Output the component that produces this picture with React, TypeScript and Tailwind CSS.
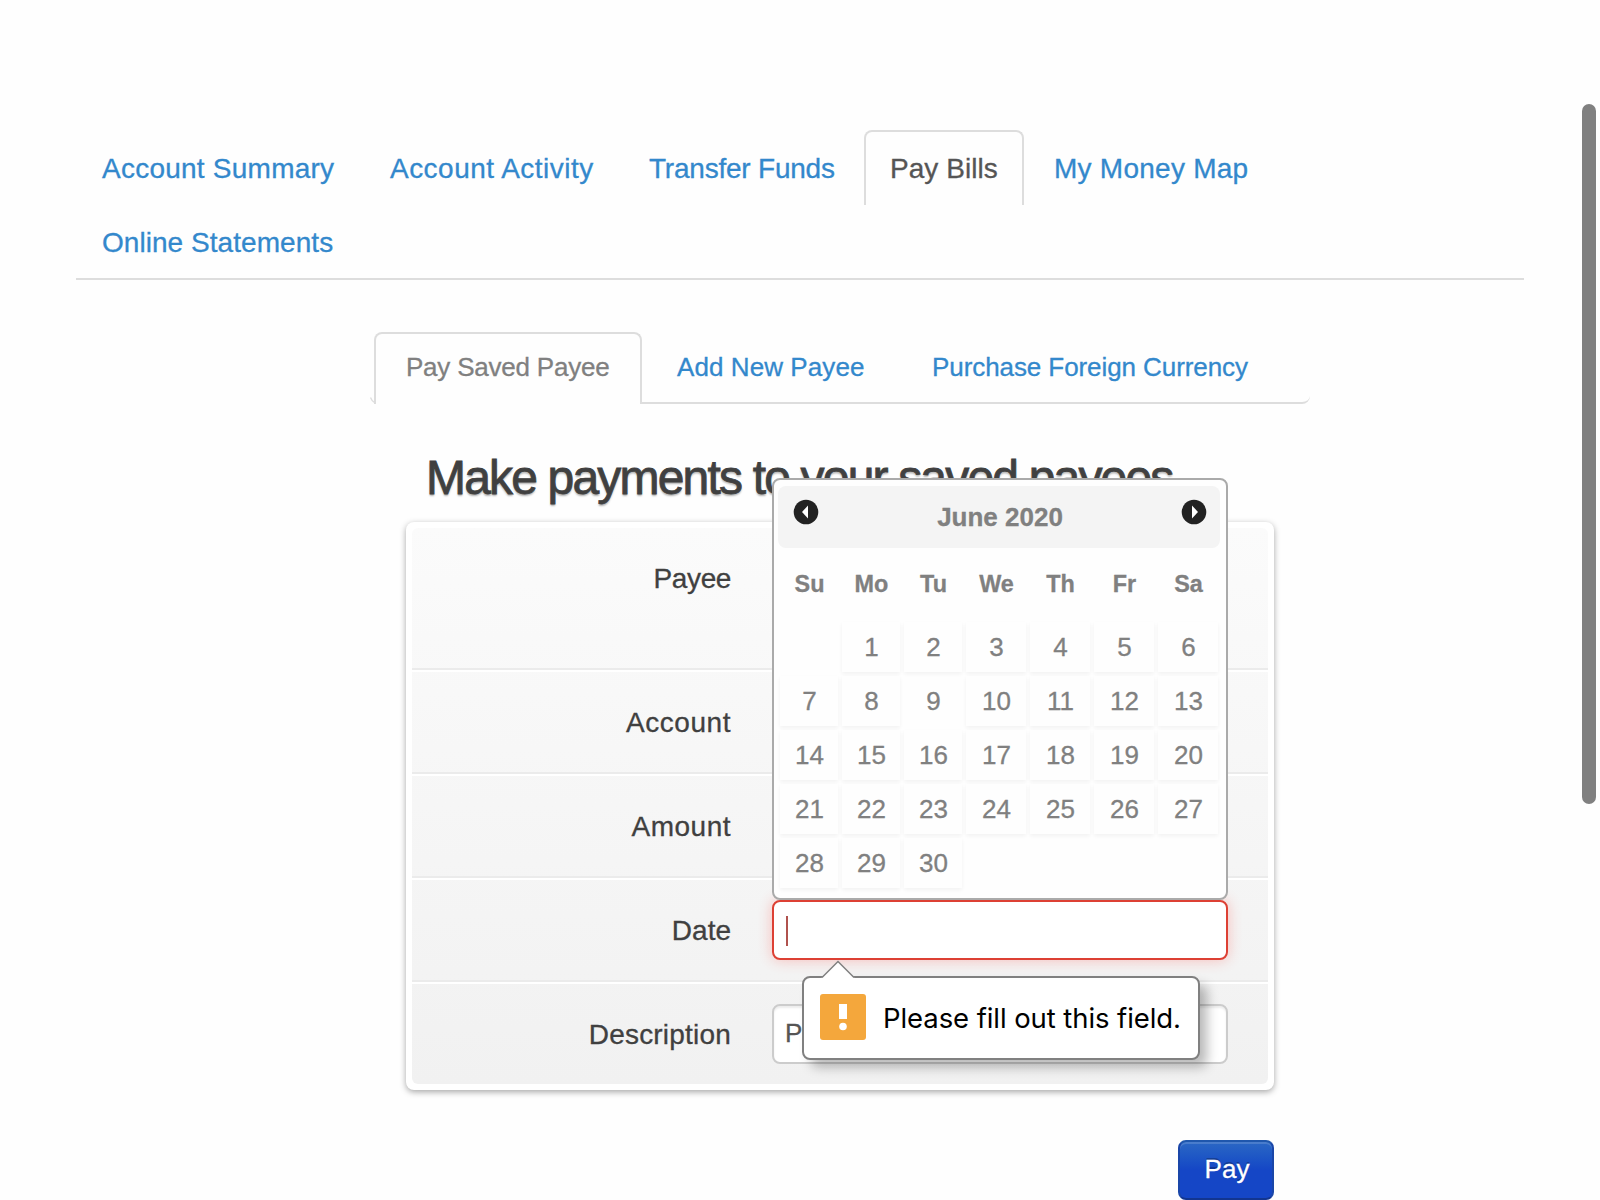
import React from "react";

const mainTabs = [
  { label: "Account Summary", box: "w-[284px]", spacing: "tracking-[0.24px]" },
  { label: "Account Activity", box: "w-[255px]", spacing: "tracking-[0.47px]" },
  { label: "Transfer Funds", box: "w-[237px]", spacing: "tracking-[-0.22px]" },
  { label: "Pay Bills", box: "w-[160px]", spacing: "tracking-[0.05px]", active: true },
  { label: "My Money Map", box: "w-[246px]", spacing: "tracking-[0.25px]" },
  { label: "Online Statements", box: "w-[284px]", spacing: "tracking-[0.05px]" },
];

const weekdays = ["Su", "Mo", "Tu", "We", "Th", "Fr", "Sa"];
const leadingBlanks = 1;
const days = Array.from({ length: 30 }, (_, i) => i + 1);

function MainTabs() {
  return (
    <nav className="mt-[130px] ml-[76px] flex h-[150px] w-[1448px] flex-wrap content-start border-b-2 border-[#dddddd]">
      {mainTabs.map((tab) => (
        <a
          key={tab.label}
          className={
            "mr-1 block pl-6 pt-[17px] text-[28px] leading-10 whitespace-nowrap border-2 border-b-0 rounded-t-lg " +
            tab.box + " " + tab.spacing + " " +
            (tab.active
              ? "h-[75px] -mb-px border-[#dddddd] text-[#555555]"
              : "h-[74px] border-transparent text-[#3388cc]")
          }
        >
          {tab.label}
        </a>
      ))}
    </nav>
  );
}

function PayTabs() {
  return (
    <div className="relative mt-[52px] ml-[374px] flex h-[72px] w-[936px] text-[26px] leading-9 whitespace-nowrap">
      <svg className="absolute bottom-0 -left-1 h-2 w-1.5" viewBox="0 0 6 8">
        <path d="M0.5 1.5Q1.5 5 5 7" fill="none" stroke="#dddddd" strokeWidth="1.3" />
      </svg>
      <a className="block w-[268px] shrink-0 rounded-t-lg border-2 border-b-0 border-[#dddddd] pl-[30px] pt-[15px] tracking-[-0.22px] text-[#808080]">
        Pay Saved Payee
      </a>
      <div className="flex grow rounded-br-lg border-b-2 border-[#dddddd] pt-[17px] text-[#3388cc]">
        <a className="ml-[35px] w-[255px] tracking-[0.08px]">Add New Payee</a>
        <a className="tracking-[-0.08px]">Purchase Foreign Currency</a>
      </div>
    </div>
  );
}

function MonthArrow({ next = false }: { next?: boolean }) {
  return (
    <svg className="size-[26px]" viewBox="0 0 26 26">
      <circle cx="13" cy="13" r="12.3" fill="#222222" />
      <path d={next ? "M11 6.5v13l6-6.5z" : "M15 6.5v13l-6-6.5z"} fill="#ffffff" />
    </svg>
  );
}

function Calendar() {
  return (
    <div className="absolute bottom-full left-0 z-10 h-[422px] w-[456px] rounded-lg border-2 border-[#aaaaaa] bg-[#fefefe] pl-1 pt-1.5 text-[#808080]">
      <div className="flex h-[62px] w-[442px] items-start justify-between rounded-lg bg-[#f4f4f4] pt-[13px] pr-[13px] pl-[15px]">
        <MonthArrow />
        <div className="text-[26px] leading-9 font-bold">June 2020</div>
        <MonthArrow next />
      </div>
      <div className="ml-0.5 grid grid-cols-[58px_58px_58px_60px_60px_60px_60px] gap-x-1 pt-[18px] text-center text-[23.4px] leading-9 font-bold">
        {weekdays.map((day) => (
          <div key={day} className="pl-px">{day}</div>
        ))}
      </div>
      <div className="mt-5 ml-0.5 grid auto-rows-[50px] grid-cols-[58px_58px_58px_60px_60px_60px_60px] gap-1 text-center text-[26px] leading-[50px]">
        {Array.from({ length: leadingBlanks }, (_, i) => (
          <div key={"blank" + i} />
        ))}
        {days.map((day) => (
          <div key={day} className={day === 9 ? "pl-px" : "bg-[#fefefe] pl-px shadow-[0_2px_4px_rgba(0,0,0,0.05)]"}>
            {day}
          </div>
        ))}
      </div>
    </div>
  );
}

function ValidationBubble() {
  return (
    <div className="absolute top-[76px] left-[30px] z-20 flex h-[84px] w-[398px] rounded-lg border-2 border-[#808080] bg-white pt-4 pl-4 shadow-[8px_8px_12px_-1px_rgba(0,0,0,0.28)]">
      <svg className="absolute -top-[18px] left-[17px] h-[19px] w-[34px]" viewBox="0 0 34 19">
        <path d="M0 19L1 17.5L17 1.5L33 17.5L34 19z" fill="#ffffff" />
        <path d="M1 17.5L17 1.5L33 17.5" fill="none" stroke="#808080" strokeWidth="1.5" />
      </svg>
      <svg className="size-[46px] shrink-0" viewBox="0 0 46 46">
        <rect width="46" height="46" rx="3" fill="#f4a73c" />
        <path d="M19 10h8v15h-8z" fill="#ffffff" />
        <circle cx="23" cy="32.5" r="3.8" fill="#ffffff" />
      </svg>
      <span className="ml-[17px] pt-1 font-['Inter'] text-[27.5px] leading-10 tracking-[-0.08px] whitespace-nowrap text-black [-webkit-text-stroke:0px]">
        Please fill out this field.
      </span>
    </div>
  );
}

function FormRow({
  label,
  spacing,
  frame,
  children,
}: {
  label: string;
  spacing: string;
  frame: string;
  children?: React.ReactNode;
}) {
  return (
    <div className={"flex border-t-white border-b-[#ebebeb] " + frame}>
      <label className={"w-[319px] text-right text-[28px] leading-10 whitespace-nowrap text-[#404040] " + spacing}>
        {label}
      </label>
      {children}
    </div>
  );
}

function PaymentForm() {
  return (
    <div className="mt-[17px] ml-[406px] h-[568px] w-[868px] rounded-lg bg-white p-1.5 shadow-[0_2px_6px_rgba(0,0,0,0.35)]">
      <div className="h-[556px] rounded-md bg-linear-to-b from-[#fbfbfb] to-[#f1f1f1]">
        <FormRow label="Payee" spacing="pt-[31px] tracking-[-0.4px]" frame="h-[142px] border-b-2" />
        <FormRow label="Account" spacing="pt-[31px] tracking-[0.55px]" frame="h-[104px] border-y-2" />
        <FormRow label="Amount" spacing="pt-[31px] tracking-[0.5px]" frame="h-[104px] border-y-2" />
        <FormRow label="Date" spacing="pt-[31px]" frame="h-[104px] border-y-2">
          <div className="relative mt-5 ml-[41px] h-[60px] w-[456px]">
            <div className="h-[60px] rounded-lg border-2 border-[#dd4034] bg-white pt-3.5 pl-3 shadow-[0_0_14px_rgba(255,60,50,0.3)]">
              <div className="h-[30px] w-0.5 bg-[#b0524e]" />
            </div>
            <Calendar />
            <ValidationBubble />
          </div>
        </FormRow>
        <FormRow label="Description" spacing="pt-[31px] tracking-[0.2px]" frame="h-[102px] border-t-2">
          <div className="mt-5 ml-[41px] h-[60px] w-[456px] rounded-lg border-2 border-[#cccccc] bg-white pt-[9px] pl-[11px] text-[26px] leading-9 text-[#555555] shadow-[inset_0_2px_2px_rgba(0,0,0,0.075)]">
            P
          </div>
        </FormRow>
      </div>
    </div>
  );
}

export default function App() {
  return (
    <div className="relative flex h-[1200px] w-[1600px] flex-col overflow-hidden bg-[#fefefe] font-['Liberation_Sans',sans-serif] [-webkit-text-stroke:0.3px]">
      <MainTabs />
      <PayTabs />
      <h1 className="mt-[47px] ml-[426px] text-[48px] leading-[54px] tracking-[-1.82px] whitespace-nowrap text-[#404040] [-webkit-text-stroke:0.8px] [text-shadow:0_2px_2px_rgba(0,0,0,0.3)]">
        Make payments to your saved payees
      </h1>
      <PaymentForm />
      <button className="mt-[50px] ml-[1178px] h-[60px] w-24 shrink-0 rounded-lg border-2 border-t-[#1f57ad] border-x-[#1a46a8] border-b-[#123590] bg-linear-to-b from-[#2b67c4] to-[#1546c6] to-50% pb-0.5 pl-0.5 text-[26px] leading-9 text-white shadow-[inset_0_2px_0_rgba(255,255,255,0.15)] [text-shadow:0_-2px_0_rgba(0,0,0,0.25)]">
        Pay
      </button>
      <div className="absolute top-[104px] left-[1582px] h-[700px] w-3.5 rounded-full bg-[#808080]" />
    </div>
  );
}
